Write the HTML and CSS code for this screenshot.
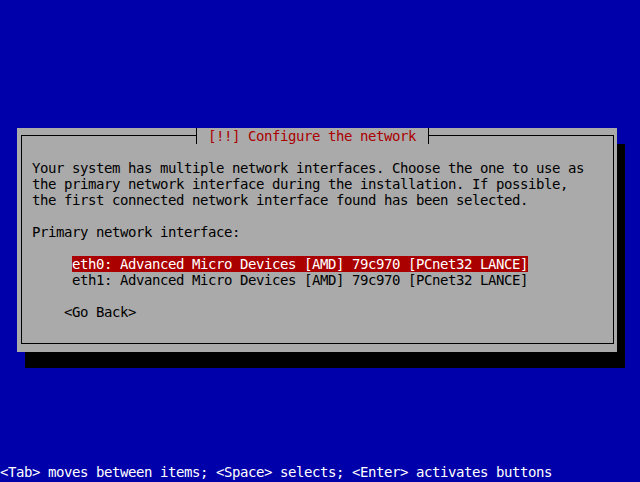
FILE: index.html
```html
<!DOCTYPE html>
<html lang="en">
<head>
    <meta charset="UTF-8">
    <meta name="viewport" content="width=device-width, initial-scale=1.0">
    <title>Configure the network</title>
    <link rel="stylesheet" href="styles.css">
</head>
<body>
    <div class="screen">
        <div class="dialog">
            <div class="frame">
                <div class="title">[!!] Configure the network</div>
                <p class="intro">Your system has multiple network interfaces. Choose the one to use as<br>the primary network interface during the installation. If possible,<br>the first connected network interface found has been selected.</p>
                <p class="label">Primary network interface:</p>
                <ul class="choices">
                    <li><span class="choice selected">eth0: Advanced Micro Devices [AMD] 79c970 [PCnet32 LANCE]</span></li>
                    <li><span class="choice">eth1: Advanced Micro Devices [AMD] 79c970 [PCnet32 LANCE]</span></li>
                </ul>
                <div class="back">&lt;Go Back&gt;</div>
            </div>
        </div>
        <div class="help">&lt;Tab&gt; moves between items; &lt;Space&gt; selects; &lt;Enter&gt; activates buttons</div>
    </div>
</body>
</html>
```

FILE: styles.css
```css
*{margin:0;padding:0;box-sizing:border-box;}
body{background:#0000aa;font-family:"DejaVu Sans Mono", monospace;font-size:14px;line-height:16px;letter-spacing:-0.43px;}
.screen{height:482px;display:flex;flex-direction:column;white-space:nowrap;}
.dialog{width:600px;height:224px;margin:128px 0 0 17px;padding:7px 3px 8px 4px;background:#aaaaaa;color:#000;box-shadow:8px 16px 0 #000;display:flex;}
.frame{flex:1;position:relative;border:1px solid #000;padding:24px 0 0 10px;}
.title{position:absolute;top:-8px;left:174px;height:16px;padding:0 12px 0 11px;background:#aaaaaa;color:#aa0000;border-left:1px solid #000;border-right:1px solid #000;}
.label{margin-top:16px;}
.choices{list-style:none;margin-top:16px;padding-left:40px;}
.choice{display:inline-block;vertical-align:top;}
.choice.selected{background:#aa0000;color:#fff;}
.back{margin-top:16px;padding-left:32px;}
.help{margin-top:auto;margin-bottom:2px;color:#fff;}
```
